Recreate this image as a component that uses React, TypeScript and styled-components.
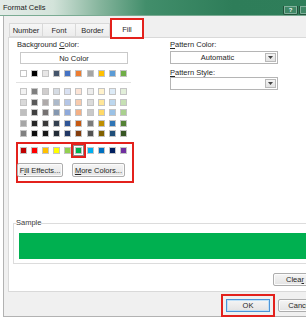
import React from "react";
import styled, { createGlobalStyle } from "styled-components";

const GlobalStyle = createGlobalStyle`
  html, body {
    margin: 0;
    padding: 0;
    background: #fff;
    overflow: hidden;
  }
  body {
    font-family: "Liberation Sans", Arial, sans-serif;
    font-size: 7.5px;
    color: #1e1e1e;
  }
  * { box-sizing: border-box; }
`;

// theme colours, then the tint/shade rows, then the standard colours
const THEME = ["#FFFFFF", "#000000", "#E7E6E6", "#44546A", "#4472C4", "#ED7D31", "#A5A5A5", "#FFC000", "#5B9BD5", "#70AD47"];
const TINTS = [
  ["#F2F2F2", "#7F7F7F", "#D0CECE", "#D6DCE4", "#D9E1F2", "#FCE4D6", "#EDEDED", "#FFF2CC", "#DDEBF7", "#E2EFDA"],
  ["#D9D9D9", "#595959", "#AEAAAA", "#ACB9CA", "#B4C6E7", "#F8CBAD", "#DBDBDB", "#FFE699", "#BDD7EE", "#C6E0B4"],
  ["#BFBFBF", "#404040", "#757171", "#8497B0", "#8EA9DB", "#F4B084", "#C9C9C9", "#FFD966", "#9BC2E6", "#A9D08E"],
  ["#A6A6A6", "#262626", "#3A3838", "#333F4F", "#2F5597", "#C65911", "#7B7B7B", "#BF8F00", "#2F75B5", "#548235"],
  ["#808080", "#0D0D0D", "#161616", "#222B35", "#203764", "#833C0C", "#525252", "#806000", "#1F4E78", "#375623"],
];
const STANDARD = ["#C00000", "#FF0000", "#FFC000", "#FFFF00", "#92D050", "#00B050", "#00B0F0", "#0070C0", "#002060", "#7030A0"];
const SELECTED = 5;

const Window = styled.div`
  width: 332px;
  height: 320px;
  display: flex;
  flex-direction: column;
  background: #fff;
`;

const TitleBar = styled.div`
  height: 16px;
  flex: none;
  display: flex;
  align-items: flex-start;
  padding-left: 3px;
  background: linear-gradient(
    90deg,
    #e3ebe7 0%,
    #d3e3da 16%,
    #86b59d 30%,
    #428e6b 44%,
    #2e7d59 70%,
    #2f7e5a 100%
  );
  box-shadow: inset 0 -1px 0 #7aab93;
`;

const Title = styled.span`
  line-height: 15px;
  color: #1a1a1a;
`;

const CaptionButtons = styled.div`
  margin-left: auto;
  margin-top: 6px;
  display: flex;
  gap: 1px;
`;

const CaptionButton = styled.span<{ $w: number }>`
  width: ${(p) => p.$w}px;
  height: 9px;
  border: 1px solid rgba(20, 60, 40, 0.7);
  border-top: none;
  border-radius: 0 0 2px 2px;
  box-shadow: inset 0 0 0 1px rgba(255, 255, 255, 0.35);
  background: rgba(255, 255, 255, 0.08);
  color: #f2f7f4;
  font-size: 6px;
  font-weight: bold;
  line-height: 8px;
  text-align: center;
`;

const Frame = styled.div`
  flex: 1;
  display: flex;
  padding: 0 0 3px 3px;
  background: #fff;
`;

const Dialog = styled.div`
  flex: 1;
  display: flex;
  flex-direction: column;
  background: #f0f0f0;
  border-left: 1px solid #b2b2b2;
  border-bottom: 1px solid #b2b2b2;
  padding: 0 8px 0 4px;
`;

const TabStrip = styled.div`
  height: 21px;
  flex: none;
  display: flex;
  align-items: flex-end;
  padding-left: 1px;
`;

const Tab = styled.div<{ $w: number; $active?: boolean; $first?: boolean }>`
  width: ${(p) => p.$w}px;
  height: ${(p) => (p.$active ? 19 : 14)}px;
  margin-left: ${(p) => (p.$active ? 1 : 0)}px;
  margin-bottom: ${(p) => (p.$active ? -1 : 0)}px;
  position: relative;
  z-index: ${(p) => (p.$active ? 2 : 0)};
  display: flex;
  align-items: center;
  justify-content: center;
  padding-top: ${(p) => (p.$active ? 0 : 1)}px;
  border: 1px solid #d9d9d9;
  border-bottom: ${(p) => (p.$active ? "none" : "1px solid #d9d9d9")};
  border-left: ${(p) => (p.$first || p.$active ? "1px solid #d9d9d9" : "none")};
  background: ${(p) => (p.$active ? "#fff" : "linear-gradient(#f6f6f6, #ececec)")};
  color: #2a2a2a;
  outline: ${(p) => (p.$active ? "2px solid #e3211c" : "none")};
  outline-offset: -1px;
`;

const Panel = styled.div`
  flex: 1;
  display: flex;
  flex-direction: column;
  background: #fff;
  border: 1px solid #d9d9d9;
  padding: 1px 6px 0 8px;
`;

const Columns = styled.div`
  display: grid;
  grid-template-columns: 153px 1fr;
`;

const Column = styled.div`
  display: flex;
  flex-direction: column;
  align-items: flex-start;
`;

const Label = styled.div<{ $mt?: number }>`
  line-height: 9px;
  height: 9px;
  margin-top: ${(p) => p.$mt ?? 1}px;
  color: #262626;
  white-space: nowrap;
`;

const FlatButton = styled.div`
  width: 108px;
  height: 12px;
  margin: 3px 0 0 3px;
  border: 1px solid #c9c9c9;
  background: #fff;
  display: flex;
  align-items: center;
  justify-content: center;
  color: #262626;
`;

const SwatchRow = styled.div<{ $mt: number; $ml: number }>`
  display: grid;
  grid-template-columns: repeat(10, 7px);
  column-gap: 4.1px;
  margin-top: ${(p) => p.$mt}px;
  margin-left: ${(p) => p.$ml}px;
`;

const SwatchGrid = styled(SwatchRow)`
  row-gap: 3.5px;
`;

const Swatch = styled.span<{ $color: string; $selected?: boolean }>`
  width: 7px;
  height: 7px;
  background: ${(p) => p.$color};
  border: 1px solid #c4c4c4;
  box-shadow: ${(p) => (p.$selected ? "0 0 0 1px #fff, 0 0 0 2px #8a8a8a" : "none")};
  outline: ${(p) => (p.$selected ? "2px solid #e3211c" : "none")};
  outline-offset: 2px;
`;

const Separator = styled.div`
  width: 115px;
  height: 1px;
  margin: 5px 0 0 -1px;
  background: #e2e2e2;
`;

const MarkedBox = styled.div`
  width: 118px;
  margin: 5px 0 0 -1px;
  border: 2px solid #e3211c;
  padding: 3px 0 4px 0;
`;

const ButtonRow = styled.div`
  display: flex;
  gap: 9px;
  margin: 9px 0 0 -1px;
`;

const PushButton = styled.div<{ $w: number; $h?: number; $default?: boolean }>`
  width: ${(p) => p.$w}px;
  height: ${(p) => p.$h ?? 14}px;
  display: flex;
  align-items: center;
  justify-content: center;
  border: 1px solid ${(p) => (p.$default ? "#4d94d6" : "#adadad")};
  border-radius: ${(p) => (p.$default ? 0 : 2)}px;
  background: linear-gradient(#f5f5f5, #e3e3e3);
  box-shadow: ${(p) => (p.$default ? "inset 0 0 0 1px #bfe0f8" : "inset 0 0 0 1px #fbfbfb")};
  color: #262626;
  white-space: nowrap;
  outline: ${(p) => (p.$default ? "2px solid #e3211c" : "none")};
  outline-offset: 3px;
`;

const Dropdown = styled.div<{ $mt: number }>`
  width: 108px;
  height: 13px;
  margin-top: ${(p) => p.$mt}px;
  display: flex;
  border: 1px solid #b5b5b5;
  background: #fff;
`;

const DropdownText = styled.div`
  flex: 1;
  display: flex;
  align-items: center;
  justify-content: center;
  color: #262626;
`;

const DropArrow = styled.div`
  width: 11px;
  margin: 1px;
  border: 1px solid #b9b9b9;
  background: linear-gradient(#f4f4f4, #e2e2e2);
  display: flex;
  align-items: center;
  justify-content: center;
`;

const SampleGroup = styled.fieldset`
  margin: 35px -2px 0 -4px;
  padding: 5px 5px 4px 5px;
  border: 1px solid #dcdcdc;
  min-width: 0;
`;

const SampleLegend = styled.legend`
  padding: 0;
  margin-left: -3px;
  line-height: 10px;
  color: #3a3a3a;
`;

const SampleFill = styled.div<{ $color: string }>`
  height: 26px;
  background: ${(p) => p.$color};
`;

const ClearRow = styled.div`
  display: flex;
  justify-content: flex-end;
  margin-top: 9px;
`;

const Footer = styled.div`
  height: 24px;
  flex: none;
  display: flex;
  justify-content: flex-end;
  align-items: flex-start;
  gap: 8px;
  padding: 7px 2px 0 0;
`;

const Arrow = () => (
  <svg width="5" height="3" viewBox="0 0 5 3">
    <polygon points="0,0 5,0 2.5,3" fill="#444" />
  </svg>
);

export default function App() {
  return (
    <>
      <GlobalStyle />
      <Window>
        <TitleBar>
          <Title>Format Cells</Title>
          <CaptionButtons>
            <CaptionButton $w={15}>?</CaptionButton>
            <CaptionButton $w={33} />
          </CaptionButtons>
        </TitleBar>
        <Frame>
          <Dialog>
            <TabStrip>
              <Tab $w={34} $first>Number</Tab>
              <Tab $w={33}>Font</Tab>
              <Tab $w={34}>Border</Tab>
              <Tab $w={32} $active>Fill</Tab>
            </TabStrip>
            <Panel>
              <Columns>
                <Column>
                  <Label $mt={1}>
                    Background <u>C</u>olor:
                  </Label>
                  <FlatButton>No Color</FlatButton>
                  <SwatchRow $mt={6} $ml={3}>
                    {THEME.map((c) => (
                      <Swatch key={c} $color={c} />
                    ))}
                  </SwatchRow>
                  <Separator />
                  <SwatchGrid $mt={5} $ml={3}>
                    {TINTS.flat().map((c, i) => (
                      <Swatch key={i} $color={c} />
                    ))}
                  </SwatchGrid>
                  <MarkedBox>
                    <SwatchRow $mt={0} $ml={2}>
                      {STANDARD.map((c, i) => (
                        <Swatch key={c} $color={c} $selected={i === SELECTED} />
                      ))}
                    </SwatchRow>
                    <ButtonRow>
                      <PushButton $w={46}>
                        F<u>i</u>ll Effects...
                      </PushButton>
                      <PushButton $w={53}>
                        <u>M</u>ore Colors...
                      </PushButton>
                    </ButtonRow>
                  </MarkedBox>
                </Column>
                <Column>
                  <Label $mt={1}>
                    <u>P</u>attern Color:
                  </Label>
                  <Dropdown $mt={2}>
                    <DropdownText>Automatic</DropdownText>
                    <DropArrow>
                      <Arrow />
                    </DropArrow>
                  </Dropdown>
                  <Label $mt={4}>
                    <u>P</u>attern Style:
                  </Label>
                  <Dropdown $mt={0}>
                    <DropdownText />
                    <DropArrow>
                      <Arrow />
                    </DropArrow>
                  </Dropdown>
                </Column>
              </Columns>
              <SampleGroup>
                <SampleLegend>Sample</SampleLegend>
                <SampleFill $color={STANDARD[SELECTED]} />
              </SampleGroup>
              <ClearRow>
                <PushButton $w={44} $h={13}>
                  Clea<u>r</u>
                </PushButton>
              </ClearRow>
            </Panel>
            <Footer>
              <PushButton $w={44} $h={13} $default>
                OK
              </PushButton>
              <PushButton $w={44} $h={13}>
                Cancel
              </PushButton>
            </Footer>
          </Dialog>
        </Frame>
      </Window>
    </>
  );
}
